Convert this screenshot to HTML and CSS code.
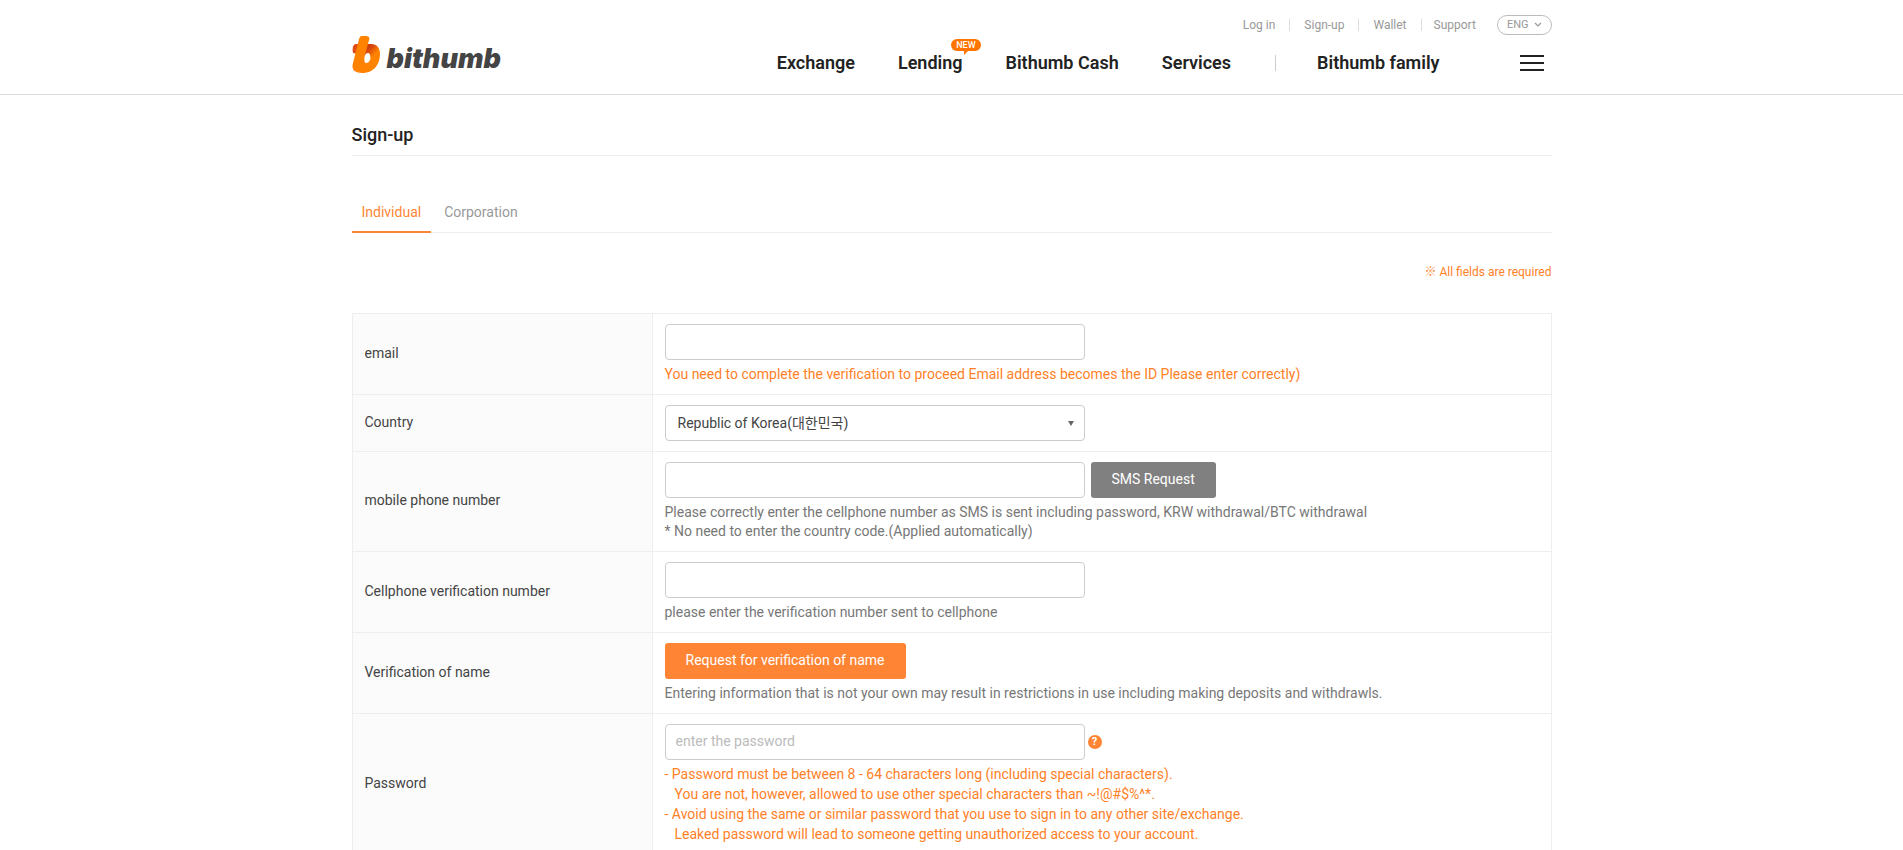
FILE: index.html
```html
<!DOCTYPE html>
<html lang="en">
<head>
<meta charset="utf-8">
<title>Sign-up | bithumb</title>
<link rel="stylesheet" href="styles.css">
</head>
<body>
<header class="header">
  <div class="wrap header-inner">
    <a class="logo" href="#" aria-label="bithumb home">
      <svg class="logo-mark" viewBox="0 0 28 38" aria-hidden="true">
        <defs>
          <linearGradient id="fold" gradientUnits="userSpaceOnUse" x1="14" y1="10" x2="23" y2="19">
            <stop offset="0" stop-color="#c4330c"/>
            <stop offset="0.45" stop-color="#d9480c"/>
            <stop offset="1" stop-color="#ff8200"/>
          </linearGradient>
        </defs>
        <path fill="#e04a14" d="M4 9H9L6 19L1 18C0 13 1 9 4 9Z"/>
        <path fill="url(#fold)" d="M13 9H19C25 9 28 13 28 19C28 25 26 30 22 34L17 28C19 25 19 18 16 18C14 18 13 20 12 22Z"/>
        <path fill="#ff8200" d="M10 1H14C17 1 18 3 17 5L13 20C12 23 12 28 14 28C16 28 17 27 18 25L25 29C22 36 16 38 10 38C3 38 -1 35 1 28L7 4C8 2 8 1 10 1Z"/>
      </svg>
      <span class="logo-text">bithumb</span>
    </a>
    <div class="header-right">
      <div class="top-links">
        <ul class="utility">
          <li><a href="#">Log in</a></li>
          <li><a href="#">Sign-up</a></li>
          <li><a href="#">Wallet</a></li>
          <li><a href="#">Support</a></li>
        </ul>
        <button class="lang" type="button">ENG
          <svg class="chevron" viewBox="0 0 8 6" aria-hidden="true"><path d="M1 1L4 4L7 1" fill="none" stroke="#999" stroke-width="1.2"/></svg>
        </button>
      </div>
      <nav class="main-nav">
        <a href="#">Exchange</a>
        <a class="has-badge" href="#">Lending<span class="badge">NEW</span></a>
        <a href="#">Bithumb Cash</a>
        <a href="#">Services</a>
        <span class="nav-divider"></span>
        <a href="#">Bithumb family</a>
        <button class="menu" type="button" aria-label="Menu"><span></span><span></span><span></span></button>
      </nav>
    </div>
  </div>
</header>
<main class="wrap">
  <h1 class="title">Sign-up</h1>
  <nav class="tabs">
    <a class="tab active" href="#">Individual</a>
    <a class="tab" href="#">Corporation</a>
  </nav>
  <p class="required">※ All fields are required</p>
  <form>
    <table class="form-table">
      <tr>
        <th scope="row"><label for="email">email</label></th>
        <td>
          <div class="field"><input class="control" id="email" type="email"></div>
          <p class="hint warn">You need to complete the verification to proceed Email address becomes the ID Please enter correctly)</p>
        </td>
      </tr>
      <tr>
        <th scope="row"><label for="country">Country</label></th>
        <td>
          <div class="field select-field">
            <select class="control select" id="country"><option>Republic of Korea(대한민국)</option></select>
          </div>
        </td>
      </tr>
      <tr>
        <th scope="row"><label for="phone">mobile phone number</label></th>
        <td>
          <div class="field"><input class="control" id="phone" type="tel"><button class="btn btn-gray" type="button">SMS Request</button></div>
          <p class="hint">Please correctly enter the cellphone number as SMS is sent including password, KRW withdrawal/BTC withdrawal<br>* No need to enter the country code.(Applied automatically)</p>
        </td>
      </tr>
      <tr>
        <th scope="row"><label for="code">Cellphone verification number</label></th>
        <td>
          <div class="field"><input class="control" id="code" type="text"></div>
          <p class="hint">please enter the verification number sent to cellphone</p>
        </td>
      </tr>
      <tr>
        <th scope="row">Verification of name</th>
        <td>
          <div class="field"><button class="btn btn-orange" type="button">Request for verification of name</button></div>
          <p class="hint">Entering information that is not your own may result in restrictions in use including making deposits and withdrawls.</p>
        </td>
      </tr>
      <tr>
        <th scope="row"><label for="password">Password</label></th>
        <td>
          <div class="field tight"><input class="control" id="password" type="password" placeholder="enter the password"><button class="help" type="button" aria-label="Password help">?</button></div>
          <ul class="rules">
            <li>- Password must be between 8 - 64 characters long (including special characters).<br><span class="indent">You are not, however, allowed to use other special characters than ~!@#$%^*.</span></li>
            <li>- Avoid using the same or similar password that you use to sign in to any other site/exchange.<br><span class="indent">Leaked password will lead to someone getting unauthorized access to your account.</span></li>
          </ul>
        </td>
      </tr>
    </table>
  </form>
</main>
</body>
</html>
```
FILE: styles.css
```css
* { box-sizing: border-box; }
body {
  margin: 0;
  background: #fff;
  color: #444;
  font: 14px/20px Roboto, "Noto Sans CJK KR", sans-serif;
}
a { color: inherit; text-decoration: none; }
button, input, select { font: inherit; }
ul { list-style: none; margin: 0; padding: 0; }
.wrap { max-width: 1200px; margin: 0 auto; }

.header { border-bottom: 1px solid #ddd; }
.header-inner { display: flex; justify-content: space-between; padding: 15px 0 18px; }
.logo { display: flex; align-items: flex-start; gap: 7px; padding-top: 20px; color: #444; }
.logo-mark { width: 28px; height: 38px; }
.logo-text { font: italic 900 27px/30px Inter, sans-serif; padding-top: 9px; }
.header-right { display: flex; flex-direction: column; align-items: flex-end; }
.top-links { display: flex; align-items: center; gap: 21px; color: #999; font-size: 12px; }
.utility { display: flex; line-height: 12px; }
.utility li + li { border-left: 1px solid #ddd; margin-left: 14px; padding-left: 14px; }
.utility li:last-child { padding-left: 12px; }
.lang {
  display: flex; align-items: center; gap: 5px;
  height: 20px; padding: 0 9px;
  border: 1px solid #bbb; border-radius: 10px;
  background: none; color: #999; font-size: 11px;
}
.chevron { width: 8px; height: 6px; }
.main-nav {
  display: flex; align-items: center;
  padding: 15px 8px 0 0;
  color: #222; font-size: 18px; font-weight: 600; line-height: 26px;
}
.main-nav a + a { margin-left: 43px; }
.nav-divider { width: 1px; height: 16px; margin: 0 41px 0 44px; background: #ccc; }
.has-badge { position: relative; }
.badge {
  position: absolute; left: 53px; top: -11px;
  width: 30px; height: 12px; border-radius: 6px;
  background: #ff7500; color: #fff;
  font-size: 9px; font-weight: 500; line-height: 12px; text-align: center;
}
.badge::after {
  content: ""; position: absolute; left: 13px; top: 12px;
  border-top: 4px solid #ff7500; border-right: 4px solid transparent;
}
.menu {
  display: flex; flex-direction: column; gap: 5px;
  width: 24px; margin-left: 80px; padding: 0; border: 0; background: none;
}
.menu span { height: 2px; background: #222; }

.title {
  margin: 0; padding: 28px 0 8px;
  border-bottom: 1px solid #eee;
  color: #222; font-size: 18px; font-weight: 500; line-height: 24px;
}
.tabs { display: flex; gap: 3px; margin-top: 44px; border-bottom: 1px solid #eee; }
.tab { padding: 1px 10px 8px; color: #999; line-height: 22px; border-bottom: 2px solid transparent; margin-bottom: -1px; }
.tab.active { color: #ff8534; border-color: #ff8534; }
.required { margin: 29px 0 31px; color: #ff7f27; font-size: 12px; text-align: right; }

.form-table { width: 100%; border-collapse: collapse; table-layout: fixed; }
.form-table th, .form-table td { border: 1px solid #eee; text-align: left; vertical-align: middle; }
.form-table th { width: 300px; padding: 0 12px 3px; background: #fbfbfb; font-weight: 400; }
.form-table td { padding: 10px 12px; }
.field { display: flex; align-items: center; gap: 6px; }
.field.tight { gap: 3px; }
.control {
  width: 420px; height: 36px; padding: 0 10px 3px;
  border: 1px solid #ccc; border-radius: 4px;
  background: #fff; color: #444;
}
.control::placeholder { color: #bbb; }
.select-field { position: relative; width: 420px; }
.select { appearance: none; padding: 0 12px; }
.select-field::after {
  content: ""; position: absolute; right: 11px; top: 16px;
  border: 3px solid transparent; border-top: 5px solid #666; border-bottom: 0;
}
.btn { height: 36px; padding: 0 21px 2px; border: 0; border-radius: 3px; color: #fff; font-weight: 400; }
.btn-gray { background: #808080; }
.btn-orange { background: #ff8534; }
.hint { margin: 5px 0 0; color: #777; line-height: 19px; }
.hint.warn, .rules { color: #ff7f27; }
.rules { margin-top: 4px; }
.indent { padding-left: 10px; }
.help {
  width: 14px; height: 14px; padding: 0; border: 0; border-radius: 50%;
  background: #ff8534; color: #fff; font-size: 11px; font-weight: 700; line-height: 14px;
}
```
